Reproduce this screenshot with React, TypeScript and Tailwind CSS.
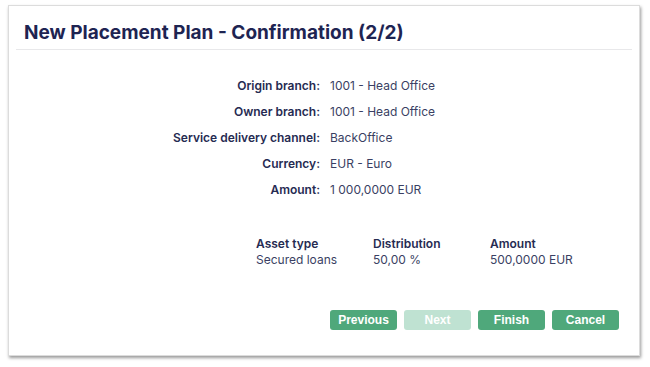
import React from "react";

const FIELDS = [
  ["Origin branch:", "1001 - Head Office"],
  ["Owner branch:", "1001 - Head Office"],
  ["Service delivery channel:", "BackOffice"],
  ["Currency:", "EUR - Euro"],
  ["Amount:", "1 000,0000 EUR"],
];

const ALLOCATIONS = [
  { assetType: "Secured loans", distribution: "50,00 %", amount: "500,0000 EUR" },
];

function Button({ label, disabled }: { label: string; disabled?: boolean }) {
  return (
    <button
      disabled={disabled}
      className={
        "w-[67px] h-[20px] rounded-[3px] text-[12px] font-bold text-white leading-none " +
        (disabled ? "bg-[#bfe2d2]" : "bg-[#4fa87b]")
      }
      style={{ fontFamily: "'Liberation Sans', Arial, sans-serif" }}
    >
      {label}
    </button>
  );
}

export default function App() {
  return (
    <div className="w-[650px] h-[367px] bg-white pt-[5px] pl-[8px]" style={{ fontFamily: "Inter, sans-serif" }}>
      <div className="w-[632px] h-[351px] bg-white border border-[#dcdcdc] shadow-[1px_2px_3px_rgba(0,0,0,0.4)] flex flex-col">
        {/* Header */}
        <div className="mx-[7px] border-b border-[#e8e8ea] pt-[15px] pb-[4px] pl-[8px]">
          <h1 className="text-[19px] font-bold text-[#1e2452] leading-[24px]">
            New Placement Plan - Confirmation (2/2)
          </h1>
        </div>

        {/* Summary */}
        <div className="grid grid-cols-[311px_1fr] gap-x-[10px] mt-[23px] text-[12px]">
          {FIELDS.map(([label, value]) => (
            <React.Fragment key={label}>
              <div className="text-right font-semibold text-[#262b52] h-[26px] leading-[26px]">{label}</div>
              <div className="text-[#3a3f63] h-[26px] leading-[26px]">{value}</div>
            </React.Fragment>
          ))}
        </div>

        {/* Allocation table */}
        <div className="mt-[33px] pl-[247px] text-[12px]">
          <div className="grid grid-cols-[117px_117px_117px] font-semibold text-[#262b52] leading-[16px]">
            <div>Asset type</div>
            <div>Distribution</div>
            <div>Amount</div>
          </div>
          {ALLOCATIONS.map((a) => (
            <div key={a.assetType} className="grid grid-cols-[117px_117px_117px] text-[#3a3f63] leading-[16px]">
              <div>{a.assetType}</div>
              <div>{a.distribution}</div>
              <div>{a.amount}</div>
            </div>
          ))}
        </div>

        {/* Actions */}
        <div className="mt-auto mb-[25px] pr-[20px] flex justify-end gap-[7px]">
          <Button label="Previous" />
          <Button label="Next" disabled />
          <Button label="Finish" />
          <Button label="Cancel" />
        </div>
      </div>
    </div>
  );
}
